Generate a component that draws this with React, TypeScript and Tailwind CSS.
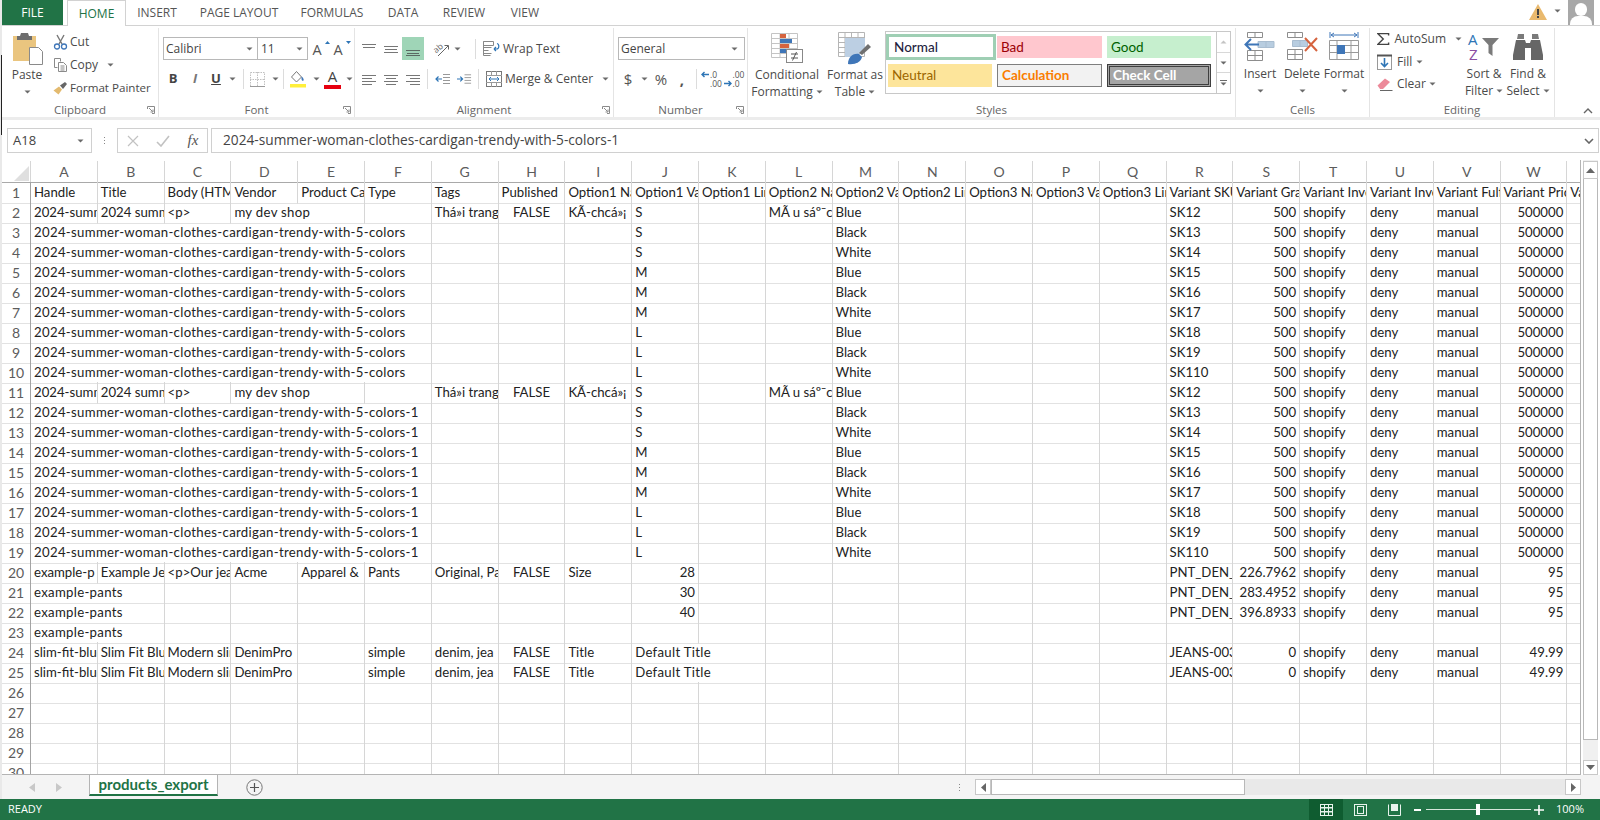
import React from 'react';

type Cell = string | { t: string; span?: number; align?: 'r' | 'c' };
type Row = Record<string, Cell>;

const LETTERS = ['A','B','C','D','E','F','G','H','I','J','K','L','M','N','O','P','Q','R','S','T','U','V','W','X'];
const GRID = 'grid grid-cols-[29px_repeat(23,66.8px)_14px]';

const r = (t: string): Cell => ({ t, align: 'r' });
const c = (t: string): Cell => ({ t, align: 'c' });

const productRow = (sku: string): Row => ({
  A: '2024-summer-woman-clothes-cardigan-trendy-with-5-colors',
  B: '2024 summer woman clothes',
  C: '<p>',
  D: { t: 'my dev shop', span: 2 },
  G: 'Thá»i trang nữ',
  H: c('FALSE'),
  I: 'KÃ-chcá»¡',
  J: 'S',
  L: 'MÃ u sáº¯c',
  M: 'Blue',
  R: sku,
  S: r('500'),
  T: 'shopify',
  U: 'deny',
  V: 'manual',
  W: r('500000'),
});

const variantRow = (handle: string, size: string, color: string, sku: string): Row => ({
  A: { t: handle, span: 6 },
  J: size,
  M: color,
  R: sku,
  S: r('500'),
  T: 'shopify',
  U: 'deny',
  V: 'manual',
  W: r('500000'),
});

const VARIANTS: [string, string, string][] = [
  ['S', 'Black', 'SK13'],
  ['S', 'White', 'SK14'],
  ['M', 'Blue', 'SK15'],
  ['M', 'Black', 'SK16'],
  ['M', 'White', 'SK17'],
  ['L', 'Blue', 'SK18'],
  ['L', 'Black', 'SK19'],
  ['L', 'White', 'SK110'],
];

const H1 = '2024-summer-woman-clothes-cardigan-trendy-with-5-colors';

const pantsRow = (size: string, grams: string): Row => ({
  A: { t: 'example-pants', span: 2 },
  J: r(size),
  R: 'PNT_DEN_BLU_' + size,
  S: r(grams),
  T: 'shopify',
  U: 'deny',
  V: 'manual',
  W: r('95'),
});

const jeansRow: Row = {
  A: 'slim-fit-blue-jeans',
  B: 'Slim Fit Blue Jeans',
  C: 'Modern slim fit jeans',
  D: 'DenimPro',
  F: 'simple',
  G: 'denim, jea',
  H: c('FALSE'),
  I: 'Title',
  J: { t: 'Default Title', span: 2 },
  R: 'JEANS-003-BLUE',
  S: r('0'),
  T: 'shopify',
  U: 'deny',
  V: 'manual',
  W: r('49.99'),
};

const ROWS: Row[] = [
  {
    A: 'Handle', B: 'Title', C: 'Body (HTML)', D: 'Vendor', E: 'Product Category', F: 'Type', G: 'Tags', H: 'Published',
    I: 'Option1 Name', J: 'Option1 Value', K: 'Option1 Linked To', L: 'Option2 Name', M: 'Option2 Value',
    N: 'Option2 Linked To', O: 'Option3 Name', P: 'Option3 Value', Q: 'Option3 Linked To', R: 'Variant SKU',
    S: 'Variant Grams', T: 'Variant Inventory', U: 'Variant Inventory', V: 'Variant Fulfillment', W: 'Variant Price', X: 'Variant',
  },
  productRow('SK12'),
  ...VARIANTS.map(([s, col, sku]) => variantRow(H1, s, col, sku)),
  productRow('SK12'),
  ...VARIANTS.map(([s, col, sku]) => variantRow(H1 + '-1', s, col, sku)),
  {
    A: 'example-p', B: 'Example Jeans', C: '<p>Our jeans are', D: 'Acme', E: 'Apparel &', F: 'Pants',
    G: 'Original, Pants', H: c('FALSE'), I: 'Size', J: r('28'), R: 'PNT_DEN_BLU_28', S: r('226.7962'),
    T: 'shopify', U: 'deny', V: 'manual', W: r('95'),
  },
  pantsRow('30', '283.4952'),
  pantsRow('40', '396.8933'),
  { A: { t: 'example-pants', span: 2 } },
  jeansRow,
  jeansRow,
  {}, {}, {}, {}, {},
];

const SPAN: Record<number, string> = { 2: 'col-span-2 tracking-[0.3px]', 6: 'col-span-6 tracking-[0.31px]' };

function SheetRow({ n, row }: { n: number; row: Row }) {
  const cells: React.ReactNode[] = [];
  let i = 0;
  while (i < LETTERS.length) {
    const l = LETTERS[i];
    const v = row[l];
    const t = typeof v === 'string' ? v : v?.t ?? '';
    const span = typeof v === 'object' ? v.span ?? 1 : 1;
    const align = typeof v === 'object' ? v.align : undefined;
    const alignCls = align === 'r' ? 'justify-end pr-[3px]' : align === 'c' ? 'justify-center' : 'pl-[3px]';
    cells.push(
      <div
        key={l}
        className={`flex items-center overflow-hidden whitespace-nowrap border-r border-b border-r-[#d6d6d6] border-b-[#e2e2e2] ${alignCls} ${SPAN[span] ?? ''}`}
      >
        {t}
      </div>,
    );
    i += span;
  }
  return (
    <div className={`${GRID} h-5 shrink-0`}>
      <div className="flex items-center justify-center border-r border-b border-r-[#a3a3a3] border-b-[#e2e2e2] text-[#5c5c5c] text-[14px]">
        {n}
      </div>
      {cells}
    </div>
  );
}

function Caret({ className = '' }: { className?: string }) {
  return (
    <svg width="7" height="4" viewBox="0 0 7 4" className={`shrink-0 ${className}`}>
      <path d="M0.5 0.5h6L3.5 3.5z" fill="#6a6a6a" />
    </svg>
  );
}

function Launcher() {
  return (
    <svg width="8" height="8" viewBox="0 0 8 8">
      <path d="M0.5 3V0.5H7.5V7.5H5" fill="none" stroke="#8a8a8a" />
      <path d="M2 2l3.5 3.5M6 3.5V6H3.5" fill="none" stroke="#8a8a8a" />
    </svg>
  );
}

function Group({ label, width, launcher, children }: { label: string; width: string; launcher?: boolean; children: React.ReactNode }) {
  return (
    <div className={`relative flex flex-col h-[89px] mt-[2px] border-r border-[#e4e4e4] shrink-0 ${width}`}>
      <div className="flex-1 min-h-0 -mt-[2px]">{children}</div>
      <div className="grid grid-cols-[1fr_auto_1fr] items-center h-[17px] mb-[-1px] text-[11.5px] text-[#666]">
        <span />
        <span>{label}</span>
        <span className="flex justify-end pr-[3px]">{launcher && <Launcher />}</span>
      </div>
    </div>
  );
}

function Lines({ rows, color = '#777' }: { rows: [number, number, number][]; color?: string }) {
  return (
    <svg width="16" height="14" viewBox="0 0 16 14">
      {rows.map(([x1, x2, y], i) => (
        <line key={i} x1={x1} x2={x2} y1={y + 0.5} y2={y + 0.5} stroke={color} strokeWidth="1" />
      ))}
    </svg>
  );
}

function Slot({ w = 'w-[22px]', children, className = '' }: { w?: string; children?: React.ReactNode; className?: string }) {
  return <div className={`flex items-center justify-center h-full shrink-0 ${w} ${className}`}>{children}</div>;
}

function VSep() {
  return <div className="w-px h-[20px] bg-[#dcdcdc] shrink-0" />;
}

function BigButton({ w, icon, line1, line2 }: { w: string; icon: React.ReactNode; line1: string; line2?: string }) {
  return (
    <div className={`flex flex-col items-center shrink-0 ${w}`}>
      <div className="flex items-center justify-center h-[34px]">{icon}</div>
      <div className="mt-px h-[17px] leading-[17px]">{line1}</div>
      <div className="h-[17px] flex items-center gap-[3px] leading-[17px]">
        {line2 && <span>{line2}</span>}
        <Caret />
      </div>
    </div>
  );
}

const ScissorsIcon = () => (
  <svg width="15" height="16" viewBox="0 0 15 16">
    <path d="M4 1l5 9M11 1L6 10" stroke="#777" strokeWidth="1.4" fill="none" />
    <circle cx="4" cy="12.5" r="2.5" fill="none" stroke="#3f76b8" strokeWidth="1.3" />
    <circle cx="11" cy="12.5" r="2.5" fill="none" stroke="#3f76b8" strokeWidth="1.3" />
  </svg>
);

const CopyIcon = () => (
  <svg width="15" height="16" viewBox="0 0 15 16" fill="none" stroke="#8a8a8a">
    <path d="M1.5 1.5h6v3M1.5 1.5v9h3" />
    <path d="M5.5 5.5h5l3 3v6h-8z" fill="#fff" />
    <path d="M7.5 9h4M7.5 11h4M7.5 13h4" />
  </svg>
);

const PainterIcon = () => (
  <svg width="16" height="14" viewBox="0 0 16 14">
    <path d="M0.5 9.5L6 5.5l3 3-3.5 5z" fill="#e3ba6f" />
    <path d="M7 4.5L12 1l2 2-4 5z" fill="#666" />
  </svg>
);

const PasteIcon = () => (
  <svg width="32" height="34" viewBox="0 0 32 34">
    <rect x="1" y="4" width="23" height="25" fill="#eac57f" />
    <path d="M5 4h3l1-3h7l1 3h3v4H5z" fill="#6e6e6e" />
    <path d="M17.5 15.5h9l4 4v13h-13z" fill="#fff" stroke="#8a8a8a" />
  </svg>
);

const BorderIcon = () => (
  <svg width="15" height="15" viewBox="0 0 15 15" fill="none" stroke="#c0c0c0" strokeDasharray="1.5 1">
    <rect x="0.5" y="0.5" width="14" height="14" />
    <path d="M7.5 0v15M0 7.5h15" />
    <path d="M0 14.5h15" stroke="#9a9a9a" strokeDasharray="none" />
  </svg>
);

const FillIcon = () => (
  <svg width="18" height="18" viewBox="0 0 18 18">
    <path d="M7.5 1.5L2.5 7l5 5 5-5z" fill="#fff" stroke="#777" />
    <path d="M12.5 6.5c2 1.5 2.5 3 2 4-1 1-2-.5-2-1.5z" fill="#3f76b8" />
    <rect x="1" y="14" width="16" height="3.5" fill="#ffef3a" />
  </svg>
);

const FontColorIcon = () => (
  <div className="relative flex flex-col items-center w-[17px]">
    <span className="text-[15px] leading-[15px] text-[#444] font-['Open_Sans',sans-serif]">A</span>
    <div className="w-[17px] h-[4px] bg-[#e6000f] mt-[1px]" />
  </div>
);

const GrowFontIcon = ({ up }: { up?: boolean }) => (
  <div className="relative w-[18px] h-[20px]">
    <span className="absolute left-[1px] bottom-0 text-[14.5px] leading-[18px] text-[#555]">A</span>
    <svg width="5" height="3" viewBox="0 0 5 3" className="absolute right-0 top-[2px]">
      <path d={up ? 'M0 3h5L2.5 0z' : 'M0 0h5L2.5 3z'} fill="#2e75b6" />
    </svg>
  </div>
);

const OrientIcon = () => (
  <svg width="20" height="18" viewBox="0 0 20 18">
    <text x="1" y="11" fontSize="8.5" fill="#666" fontFamily="Open Sans, sans-serif" transform="rotate(-40 6 8)">ab</text>
    <path d="M6 16L16 6M12.5 5.5H16.5V9.5" fill="none" stroke="#666" />
  </svg>
);

const IndentIcon = ({ inward }: { inward?: boolean }) => (
  <svg width="16" height="12" viewBox="0 0 16 12">
    <path d="M8 1.5h7M8 4.5h7M8 7.5h7M8 10.5h7" stroke="#999" />
    {inward ? (
      <path d="M0 6h6M3.5 3.5L6 6 3.5 8.5" fill="none" stroke="#2e75b6" strokeWidth="1.2" />
    ) : (
      <path d="M7 6H1M3.5 3.5L1 6l2.5 2.5" fill="none" stroke="#2e75b6" strokeWidth="1.2" />
    )}
  </svg>
);

const WrapIcon = () => (
  <svg width="17" height="15" viewBox="0 0 17 15" fill="none">
    <path d="M0.5 0.5h10v4h-10zM0.5 6.5h8M0.5 9.5h5M0.5 12.5h8M0.5 0.5v14h7" stroke="#888" />
    <path d="M11 8h2.5c3 0 3-5 .5-5.5M11 8l2-2M11 8l2 2" stroke="#2e75b6" strokeWidth="1.2" />
  </svg>
);

const MergeIcon = () => (
  <svg width="16" height="16" viewBox="0 0 16 16" fill="none">
    <rect x="0.5" y="0.5" width="15" height="15" stroke="#777" />
    <path d="M0 4.5h16M0 11.5h16M5.5 0v4M10.5 0v4M5.5 12v4M10.5 12v4" stroke="#999" />
    <path d="M3 8h10M5 6l-2 2 2 2M11 6l2 2-2 2" stroke="#2e75b6" />
  </svg>
);

const ArrowMini = ({ left }: { left?: boolean }) => (
  <svg width="8" height="7" viewBox="0 0 8 7" fill="none" stroke="#2e75b6" strokeWidth="1.4">
    {left ? <path d="M8 3.5H1M3.5 1L1 3.5 3.5 6" /> : <path d="M0 3.5h7M4.5 1L7 3.5 4.5 6" />}
  </svg>
);

const IncDecIcon = ({ inc }: { inc?: boolean }) => (
  <div className="grid grid-cols-[9px_12px] items-center w-[21px] text-[8.5px] leading-[9px] text-[#555] font-['Open_Sans',sans-serif]">
    {inc ? (
      <>
        <ArrowMini left />
        <span>.0</span>
        <span />
        <span>.00</span>
      </>
    ) : (
      <>
        <span />
        <span>.00</span>
        <ArrowMini />
        <span>.0</span>
      </>
    )}
  </div>
);

const CondIcon = () => (
  <svg width="34" height="32" viewBox="0 0 34 32" fill="none">
    <path d="M1.5 1.5h26v24h-26zM1.5 6.5h26M1.5 11.5h26M1.5 16.5h26M1.5 21.5h26M10 1.5v24M19 1.5v24" stroke="#c4c4c4" />
    <rect x="10" y="2" width="6" height="4" fill="#d5633e" />
    <rect x="10" y="7" width="12" height="4" fill="#3f76b8" />
    <rect x="10" y="12" width="9" height="4" fill="#d5633e" />
    <rect x="10" y="17" width="6" height="4" fill="#3f76b8" />
    <rect x="16.5" y="17.5" width="16" height="13" fill="#fff" stroke="#888" />
    <path d="M21 22h7M21 26h7M26.5 20l-4 8.5" stroke="#555" />
  </svg>
);

const TableIcon = () => (
  <svg width="36" height="34" viewBox="0 0 36 34" fill="none">
    <path d="M1.5 1.5h26v24h-26zM1.5 6.5h26M1.5 11.5h26M1.5 16.5h26M1.5 21.5h26M8 1.5v24M14.5 1.5v24M21 1.5v24" stroke="#b5b5b5" />
    <path d="M8 7h20v13l-9 6H8z" fill="#bccfe3" />
    <path d="M22 22l9-9 3 3-9 8z" fill="#707070" />
    <path d="M11 33c0-6 4-11 11-10l3 3c-1 5-7 8-14 7z" fill="#3f76b8" />
  </svg>
);

const InsertIcon = () => (
  <svg width="32" height="32" viewBox="0 0 32 32" fill="none">
    <path d="M3.5 1.5h15v5h-15zM11 1.5v5M3.5 19.5h15v10h-15zM3.5 24.5h15M11 19.5v10" stroke="#8d8d8d" />
    <path d="M14 10.5h16v6H14zM22 10.5v6" fill="#b8cde0" stroke="#a9bdd0" />
    <path d="M15 13.5H1.5M7 8l-5.5 5.5L7 19" stroke="#3f76b8" strokeWidth="2" />
  </svg>
);

const DeleteIcon = () => (
  <svg width="32" height="32" viewBox="0 0 32 32" fill="none">
    <path d="M1.5 1.5h15v5h-15zM9 1.5v5M1.5 18.5h15v10h-15zM1.5 23.5h15M9 18.5v10" stroke="#8d8d8d" />
    <path d="M6.5 9.5h15v6h-15zM14 9.5v6" fill="#b8cde0" stroke="#a9bdd0" />
    <path d="M19 7l12 13M31 7L19 20" stroke="#d5633e" strokeWidth="2" />
  </svg>
);

const FormatIcon = () => (
  <svg width="32" height="32" viewBox="0 0 32 32" fill="none">
    <path d="M2 1v6M30 1v6M3 4h26M6 2L3 4l3 2M26 2l3 2-3 2" stroke="#3f76b8" />
    <path d="M1.5 9.5h29v19h-29zM1.5 14.5h29M1.5 21.5h29M9 9.5v19M23 9.5v19" stroke="#999" />
    <rect x="9" y="14" width="8" height="9" fill="#3f76b8" />
  </svg>
);

const SortIcon = () => (
  <svg width="34" height="32" viewBox="0 0 34 32">
    <text x="1" y="14" fontSize="15" fill="#2e75b6" fontFamily="Open Sans, sans-serif">A</text>
    <text x="2" y="29" fontSize="15" fill="#8a4ea3" fontFamily="Open Sans, sans-serif">Z</text>
    <path d="M15 7h17l-6.5 7v11l-4-3v-8z" fill="#7a7a7a" />
  </svg>
);

const BinocularsIcon = () => (
  <svg width="30" height="27" viewBox="0 0 30 27">
    <path d="M4 5l1-5h6v5zM19 5V0h6l1 5z" fill="#7a7a7a" />
    <path d="M3 6h9l1 3h4l1-3h9l3 15v5H18V14h-6v12H0v-5z" fill="#666" />
  </svg>
);

const SigmaIcon = () => (
  <svg width="14" height="14" viewBox="0 0 14 14">
    <path d="M13 3V1H1l6 6-6 6h12v-2" fill="none" stroke="#444" strokeWidth="1.6" />
  </svg>
);

const FillDownIcon = () => (
  <svg width="15" height="16" viewBox="0 0 15 16" fill="none">
    <rect x="0.5" y="1.5" width="14" height="14" stroke="#999" />
    <path d="M0 1.5h15" stroke="#555" strokeWidth="2" />
    <path d="M7.5 4v8M4 9l3.5 3.5L11 9" stroke="#2e75b6" strokeWidth="1.6" />
  </svg>
);

const ClearIcon = () => (
  <svg width="16" height="14" viewBox="0 0 16 14">
    <path d="M0.5 8.5L8 1.5l5 3.5-7 7H3z" fill="#ec8a9a" />
    <path d="M3 13.5h12.5" stroke="#666" />
  </svg>
);

const TopRightIcons = () => (
  <div className="flex items-start ml-auto pr-[6px] h-[25px]">
    <svg width="18" height="16" viewBox="0 0 18 16" className="mt-[4px]">
      <path d="M9 0l9 16H0z" fill="#e9b96e" />
      <path d="M8 5h2v6H8zM8 12h2v2H8z" fill="#444" />
    </svg>
    <Caret className="ml-[7px] mt-[9px]" />
    <div className="relative w-[26px] h-[25px] ml-[7px] bg-[#a8a8a8] overflow-hidden">
      <div className="absolute left-[7px] top-[3px] w-[12px] h-[13px] rounded-full bg-white" />
      <div className="absolute left-[2px] top-[16px] w-[22px] h-[14px] rounded-t-[8px] bg-white" />
    </div>
  </div>
);

const TABS = [
  { t: 'INSERT', w: 'w-[60px]' },
  { t: 'PAGE LAYOUT', w: 'w-[104px]' },
  { t: 'FORMULAS', w: 'w-[82px]' },
  { t: 'DATA', w: 'w-[60px]' },
  { t: 'REVIEW', w: 'w-[62px]' },
  { t: 'VIEW', w: 'w-[60px]' },
];

export default function App() {
  return (
    <div className="relative w-[1600px] h-[820px] overflow-hidden flex flex-col pl-[2px] bg-[#e9e9e9] font-['Open_Sans',sans-serif] text-[12px] text-[#4a4a4a]">
      {/* window edge */}
      <div className="absolute left-px top-[55px] w-px h-[80px] bg-[#222]" />

      {/* tabs */}
      <div className="flex items-stretch h-[26px] shrink-0 bg-white border-b border-[#d2d2d2] pr-0">
        <div className="flex items-center justify-center w-[61px] h-[25px] bg-[#217346] text-white text-[12px]">FILE</div>
        <div className="flex items-center justify-center ml-[4px] w-[59px] h-[26px] bg-white border border-b-0 border-[#d2d2d2] text-[#217346] text-[12px]">HOME</div>
        <div className="flex pl-px items-center h-[25px] text-[12px] text-[#555]">
          {TABS.map((t) => (
            <span key={t.t} className={`text-center ${t.w}`}>{t.t}</span>
          ))}
        </div>
        <TopRightIcons />
      </div>

      {/* ribbon */}
      <div className="flex h-[91px] shrink-0 bg-white">
        <Group label="Clipboard" width="w-[157px]" launcher>
          <div className="flex pt-[4px]">
            <div className="flex flex-col items-center w-[50px]">
              <div className="flex justify-center h-[34px] pt-[2px] ml-[2px]"><PasteIcon /></div>
              <div className="mt-[2px] h-[17px] leading-[17px]">Paste</div>
              <div className="h-[17px] flex items-center"><Caret /></div>
            </div>
            <div className="flex flex-col">
              <div className="flex items-center h-[23px]">
                <span className="flex justify-center w-[17px] mr-px"><ScissorsIcon /></span>
                <span>Cut</span>
              </div>
              <div className="flex items-center h-[23px]">
                <span className="flex justify-center w-[17px] mr-px"><CopyIcon /></span>
                <span>Copy</span>
                <Caret className="ml-[9px]" />
              </div>
              <div className="flex items-center h-[23px]">
                <span className="flex justify-center w-[17px] mr-px"><PainterIcon /></span>
                <span className="text-[11.6px]">Format Painter</span>
              </div>
            </div>
          </div>
        </Group>

        <Group label="Font" width="w-[196px]" launcher>
          <div className="flex items-center pt-[11px] pl-[4px] h-[34px]">
            <div className="flex items-center justify-between w-[95px] h-[23px] border border-[#b8b8b8] px-[2px]">
              <span className="text-[#444]">Calibri</span>
              <Caret className="mr-[2px]" />
            </div>
            <div className="flex items-center justify-between w-[50px] h-[23px] border border-l-0 border-[#b8b8b8] px-[3px]">
              <span className="text-[#444]">11</span>
              <Caret className="mr-px" />
            </div>
            <Slot w="w-[21px]" className="ml-[2px]"><GrowFontIcon up /></Slot>
            <Slot w="w-[21px]"><GrowFontIcon /></Slot>
          </div>
          <div className="flex items-center h-[24px] mt-[7px] pl-[3px]">
            <Slot w="w-[22px]" className="font-bold text-[13px] text-[#444]">B</Slot>
            <Slot w="w-[22px]" className="italic font-bold text-[13px] text-[#777]">I</Slot>
            <Slot w="w-[20px]" className="underline font-bold text-[13px] text-[#444]">U</Slot>
            <Slot w="w-[13px]"><Caret /></Slot>
            <Slot w="w-[4px]" />
            <VSep />
            <Slot w="w-[27px]"><BorderIcon /></Slot>
            <Slot w="w-[8px]"><Caret /></Slot>
            <Slot w="w-[4px]" />
            <VSep />
            <Slot w="w-[28px]"><FillIcon /></Slot>
            <Slot w="w-[8px]"><Caret /></Slot>
            <Slot w="w-[25px]"><FontColorIcon /></Slot>
            <Slot w="w-[8px]"><Caret /></Slot>
          </div>
        </Group>

        <Group label="Alignment" width="w-[259px]" launcher>
          <div className="flex items-center mt-[11px] pl-[3px] h-[23px]">
            <Slot><Lines rows={[[1, 15, 2], [2, 14, 5]]} /></Slot>
            <Slot><Lines rows={[[1, 15, 4], [2, 14, 7], [1, 15, 10]]} /></Slot>
            <Slot className="bg-[#9fd5b7]"><Lines rows={[[1, 15, 8], [2, 14, 11], [1, 15, 13]]} color="#5a6a62" /></Slot>
            <Slot w="w-[7px]" />
            <Slot><OrientIcon /></Slot>
            <Slot w="w-[8px]"><Caret /></Slot>
            <Slot w="w-[14px]" />
            <VSep />
            <div className="flex items-center h-[23px] pl-[7px] gap-[2px]">
              <WrapIcon />
              <span className="ml-px text-[#4a4a4a]">Wrap Text</span>
            </div>
          </div>
          <div className="flex items-center h-[24px] mt-[7px] pl-[3px]">
            <Slot><Lines rows={[[1, 15, 3], [1, 11, 6], [1, 15, 9], [1, 11, 12]]} /></Slot>
            <Slot><Lines rows={[[1, 15, 3], [3, 13, 6], [1, 15, 9], [3, 13, 12]]} /></Slot>
            <Slot><Lines rows={[[1, 15, 3], [5, 15, 6], [1, 15, 9], [5, 15, 12]]} /></Slot>
            <Slot w="w-[3px]" />
            <VSep />
            <Slot w="w-[29px]"><IndentIcon /></Slot>
            <Slot w="w-[15px]"><IndentIcon inward /></Slot>
            <Slot w="w-[6px]" />
            <VSep />
            <div className="flex items-center h-[24px] pl-[7px]">
              <MergeIcon />
              <span className="ml-[3px]">Merge &amp; Center</span>
              <Caret className="ml-[9px]" />
            </div>
          </div>
        </Group>

        <Group label="Number" width="w-[134px]" launcher>
          <div className="flex mt-[11px] pl-[4px] h-[23px]">
            <div className="flex items-center justify-between w-[127px] h-[23px] border border-[#b8b8b8] px-[2px]">
              <span className="text-[#444]">General</span>
              <Caret className="mr-[4px]" />
            </div>
          </div>
          <div className="flex items-center h-[24px] mt-[7px] pl-[6px]">
            <Slot w="w-[16px]" className="text-[15px] text-[#555]">$</Slot>
            <Slot w="w-[16px]"><Caret /></Slot>
            <Slot w="w-[18px]" className="text-[15px] text-[#555]">%</Slot>
            <Slot w="w-[24px]" className="text-[15px] font-bold text-[#555]">,</Slot>
            <Slot w="w-[2px]" />
            <VSep />
            <Slot w="w-[29px]"><IncDecIcon inc /></Slot>
            <Slot w="w-[16px]"><IncDecIcon /></Slot>
          </div>
        </Group>

        <Group label="Styles" width="w-[488px]">
          <div className="flex pt-[5px]">
            <div className="flex">
              <BigButton w="w-[78px]" icon={<CondIcon />} line1="Conditional" line2="Formatting" />
              <BigButton w="w-[58px]" icon={<TableIcon />} line1="Format as" line2="Table" />
            </div>
            <div className="flex ml-px h-[63px]">
              <div className="grid grid-cols-[110px_110px_110px] grid-rows-[31px_30px] w-[332px] h-[63px] border border-[#c8c8c8] font-['Lato',sans-serif] text-[13.5px]">
                <div className="flex items-start">
                  <div className="flex items-center w-[110px] h-[26px] mt-[2px] pl-[5px] border-[3px] border-[#9fcfb4] bg-white text-[#1f1f3f] font-medium">Normal</div>
                </div>
                <div className="pl-px">
                  <div className="flex items-center w-[105px] h-[22px] mt-[4px] pl-[4px] bg-[#ffc7ce] text-[#9c0006]">Bad</div>
                </div>
                <div className="pl-px">
                  <div className="flex items-center w-[104px] h-[22px] mt-[4px] pl-[4px] bg-[#c6efce] text-[#006100]">Good</div>
                </div>
                <div className="pl-[2px]">
                  <div className="flex items-center w-[104px] h-[23px] mt-px pl-[4px] bg-[#fde59b] text-[#9c6500]">Neutral</div>
                </div>
                <div className="pl-px">
                  <div className="flex items-center w-[105px] h-[23px] mt-px pl-[4px] border border-[#7f7f7f] bg-[#f2f2f2] text-[#fa7d00] font-bold">Calculation</div>
                </div>
                <div className="pl-px">
                  <div className="flex items-center w-[104px] h-[23px] mt-px pl-[3px] border-[3px] border-double border-[#3f3f3f] bg-[#a5a5a5] text-white font-bold">Check Cell</div>
                </div>
              </div>
              <div className="flex flex-col w-[14px] h-[63px] border border-l-0 border-[#c8c8c8]">
                <div className="flex flex-1 items-center justify-center border-b border-[#d8d8d8]">
                  <svg width="7" height="4" viewBox="0 0 7 4"><path d="M0.5 3.5h6L3.5 0.5z" fill="#c4c4c4" /></svg>
                </div>
                <div className="flex flex-1 items-center justify-center border-b border-[#d8d8d8]"><Caret /></div>
                <div className="flex flex-1 flex-col items-center justify-center gap-px">
                  <div className="w-[7px] h-px bg-[#6a6a6a]" />
                  <Caret />
                </div>
              </div>
            </div>
          </div>
        </Group>

        <Group label="Cells" width="w-[134px]">
          <div className="flex pt-[4px] pl-[3px]">
            <BigButton w="w-[42px]" icon={<InsertIcon />} line1="Insert" />
            <BigButton w="w-[42px]" icon={<DeleteIcon />} line1="Delete" />
            <BigButton w="w-[42px]" icon={<FormatIcon />} line1="Format" />
          </div>
        </Group>

        <Group label="Editing" width="w-[185px]">
          <div className="flex">
            <div className="flex flex-col w-[92px] pl-[7px] pt-[2px]">
              <div className="flex items-center h-[22.5px]">
                <SigmaIcon />
                <span className="ml-[5px]">AutoSum</span>
                <Caret className="ml-[9px]" />
              </div>
              <div className="flex items-center h-[22.5px]">
                <FillDownIcon />
                <span className="ml-[5px]">Fill</span>
                <Caret className="ml-[4px]" />
              </div>
              <div className="flex items-center h-[22.5px]">
                <ClearIcon />
                <span className="ml-[4px]">Clear</span>
                <Caret className="ml-[3px]" />
              </div>
            </div>
            <div className="pt-[4px] flex">
              <BigButton w="w-[44px]" icon={<SortIcon />} line1="Sort &" line2="Filter" />
              <BigButton w="w-[44px]" icon={<BinocularsIcon />} line1="Find &" line2="Select" />
            </div>
          </div>
        </Group>

        <div className="flex flex-1 items-end justify-end pr-[7px] pb-[3px]">
          <svg width="10" height="6" viewBox="0 0 10 6"><path d="M1 5l4-4 4 4" fill="none" stroke="#666" strokeWidth="1.4" /></svg>
        </div>
      </div>

      {/* ribbon shadow */}
      <div className="h-[3px] shrink-0 bg-[#ececec]" />

      {/* formula bar */}
      <div className="flex items-stretch h-[40px] shrink-0 bg-white pt-[8px] pb-[7px] pl-[5px] pr-px">
        <div className="flex items-center justify-between w-[85px] border border-[#d0d0d0] pl-[5px] pr-[7px] text-[13px] text-[#444]">
          <span>A18</span>
          <Caret />
        </div>
        <div className="flex flex-col justify-center items-center gap-[2px] w-[25px]">
          <div className="w-px h-px bg-[#888]" />
          <div className="w-px h-px bg-[#888]" />
          <div className="w-px h-px bg-[#888]" />
        </div>
        <div className="flex items-center w-[91px] border border-[#d0d0d0] text-[#c2c2c2]">
          <Slot w="w-[30px]">
            <svg width="12" height="12" viewBox="0 0 12 12"><path d="M1 1l10 10M11 1L1 11" stroke="#c2c2c2" strokeWidth="1.2" /></svg>
          </Slot>
          <Slot w="w-[30px]">
            <svg width="14" height="12" viewBox="0 0 14 12"><path d="M1 7l4 4 8-10" fill="none" stroke="#c2c2c2" strokeWidth="1.6" /></svg>
          </Slot>
          <Slot w="w-[30px]" className="italic text-[15px] font-['Liberation_Serif',serif] text-[#555]">fx</Slot>
        </div>
        <div className="flex flex-1 items-center justify-between ml-[3px] border border-[#d0d0d0] pl-[11px] pr-[4px] text-[13.7px] text-[#444]">
          <span>2024-summer-woman-clothes-cardigan-trendy-with-5-colors-1</span>
          <svg width="10" height="6" viewBox="0 0 10 6"><path d="M1 1l4 4 4-4" fill="none" stroke="#666" strokeWidth="1.6" /></svg>
        </div>
      </div>

      {/* sheet + vertical scrollbar */}
      <div className="flex h-[615px] shrink-0 bg-white">
        <div className="w-[1579px] h-[615px] overflow-hidden flex flex-col shrink-0 border-r border-b border-[#b4b4b4] font-['Lato',sans-serif] text-[13.2px] text-[#222]">
          <div className={`${GRID} h-[22px] shrink-0 pt-px`}>
            <div className="flex items-end justify-end border-r border-b border-r-[#d6d6d6] border-b-[#a9a9a9] pr-px pb-px">
              <svg width="15" height="15" viewBox="0 0 15 15"><path d="M15 0v15H0z" fill="#dfdfdf" /></svg>
            </div>
            {LETTERS.map((l) => (
              <div key={l} className="flex items-center justify-center border-r border-b border-r-[#d6d6d6] border-b-[#a9a9a9] text-[14px] text-[#5c5c5c]">
                {l === 'X' ? '' : l}
              </div>
            ))}
          </div>
          {ROWS.map((row, i) => (
            <SheetRow key={i} n={i + 1} row={row} />
          ))}
        </div>
        <div className="flex flex-col w-[15px] ml-[2px] pt-px bg-[#f0f0f0]">
          <div className="flex items-center justify-center h-[18px] bg-white border border-[#c8c8c8]">
            <svg width="9" height="5" viewBox="0 0 9 5"><path d="M0 5h9L4.5 0z" fill="#666" /></svg>
          </div>
          <div className="h-[561px] bg-white border border-t-0 border-[#b8b8b8]" />
          <div className="flex-1" />
          <div className="flex items-center justify-center h-[15px] bg-white border border-[#c8c8c8]">
            <svg width="9" height="5" viewBox="0 0 9 5"><path d="M0 0h9L4.5 5z" fill="#666" /></svg>
          </div>
        </div>
      </div>

      {/* sheet tabs + horizontal scrollbar */}
      <div className="flex items-start h-[24px] shrink-0 bg-[#f4f4f4]">
        <div className="flex items-center justify-around w-[87px] h-[24px] px-[16px]">
          <svg width="6" height="9" viewBox="0 0 6 9"><path d="M6 0v9L0 4.5z" fill="#c8c8c8" /></svg>
          <svg width="6" height="9" viewBox="0 0 6 9"><path d="M0 0v9l6-4.5z" fill="#c8c8c8" /></svg>
        </div>
        <div className="flex items-center justify-center w-[129px] h-[21px] bg-white border-x border-b-2 border-x-[#b4b4b4] border-b-[#217346] font-['Lato',sans-serif] font-bold text-[15px] text-[#217346]">
          products_export
        </div>
        <div className="flex items-center justify-center w-[72px] h-[24px]">
          <svg width="17" height="17" viewBox="0 0 17 17" fill="none">
            <circle cx="8.5" cy="8.5" r="7.7" stroke="#777" />
            <path d="M8.5 4v9M4 8.5h9" stroke="#555" strokeWidth="1.2" />
          </svg>
        </div>
        <div className="flex flex-col items-end justify-center gap-[2px] w-[685px] h-[24px] pr-[15px]">
          <div className="w-px h-px bg-[#888]" />
          <div className="w-px h-px bg-[#888]" />
          <div className="w-px h-px bg-[#888]" />
        </div>
        <div className="flex items-center h-[16px] mt-[4px]">
          <div className="flex items-center justify-center w-[16px] h-[16px] bg-white border border-[#c8c8c8]">
            <svg width="5" height="9" viewBox="0 0 5 9"><path d="M5 0v9L0 4.5z" fill="#666" /></svg>
          </div>
          <div className="w-[254px] h-[16px] bg-white border border-[#b8b8b8]" />
          <div className="w-[320px] h-[16px] bg-[#e9e9e9]" />
          <div className="flex items-center justify-center w-[16px] h-[16px] bg-white border border-[#c8c8c8]">
            <svg width="5" height="9" viewBox="0 0 5 9"><path d="M0 0v9l5-4.5z" fill="#666" /></svg>
          </div>
        </div>
      </div>

      {/* status bar */}
      <div className="flex items-center h-[21px] shrink-0 -ml-[2px] bg-[#217346] text-white text-[11px]">
        <span className="pl-[8px]">READY</span>
        <div className="flex items-center ml-auto h-[21px]">
          <div className="flex items-center justify-center w-[34px] h-[21px] bg-[#0f5c30]">
            <svg width="13" height="12" viewBox="0 0 13 12" fill="#e8f3ec">
              <path fillRule="evenodd" d="M0 0h13v12H0zM1 1v2h3V1zm4 0v2h3V1zm4 0v2h3V1zM1 4.5v2.5h3V4.5zm4 0v2.5h3V4.5zm4 0v2.5h3V4.5zM1 8.5V11h3V8.5zm4 0V11h3V8.5zm4 0V11h3V8.5z" />
            </svg>
          </div>
          <div className="flex items-center justify-center w-[34px] h-[21px]">
            <svg width="13" height="12" viewBox="0 0 13 12" fill="none" stroke="#e8f3ec"><rect x="0.5" y="0.5" width="12" height="11" /><rect x="3.5" y="2.5" width="6" height="7" /></svg>
          </div>
          <div className="flex items-center justify-center w-[34px] h-[21px]">
            <svg width="13" height="12" viewBox="0 0 13 12" fill="none" stroke="#e8f3ec"><path d="M0.5 0.5v11h12v-11" /><path d="M3 0h7v7H3z" fill="#e8f3ec" stroke="none" /></svg>
          </div>
          <div className="flex items-center justify-start w-[15px] h-[21px] pl-[3px]">
            <div className="w-[7px] h-[2px] bg-white" />
          </div>
          <div className="relative w-[105px] h-px bg-[#d6e6dc]">
            <div className="absolute left-[50px] top-[-5px] w-[4px] h-[11px] bg-white" />
          </div>
          <div className="flex items-center justify-center w-[16px] h-[21px]">
            <svg width="10" height="10" viewBox="0 0 10 10"><path d="M5 0v10M0 5h10" stroke="#fff" strokeWidth="1.6" /></svg>
          </div>
          <span className="w-[46px] text-center">100%</span>
          <span className="w-[7px]" />
        </div>
      </div>
    </div>
  );
}
